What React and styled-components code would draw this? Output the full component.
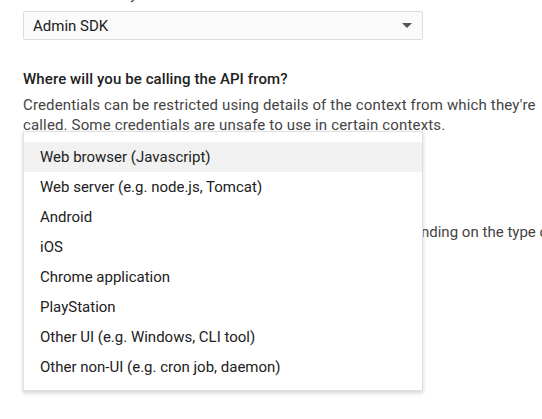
import styled, { createGlobalStyle } from 'styled-components';

const platforms = [
  'Web browser (Javascript)',
  'Web server (e.g. node.js, Tomcat)',
  'Android',
  'iOS',
  'Chrome application',
  'PlayStation',
  'Other UI (e.g. Windows, CLI tool)',
  'Other non-UI (e.g. cron job, daemon)',
];

export default function App() {
  return (
    <>
      <GlobalStyle />
      <Page>
        <Form>
          <Text>restricted to only call certain APIs.</Text>
          <Select>
            <span>Admin SDK</span>
            <Arrow />
          </Select>

          <Heading>Where will you be calling the API from?</Heading>
          <Text>
            Credentials can be restricted using details of the context from which they're called. Some
            credentials are unsafe to use in certain contexts.
          </Text>

          <Hidden>
            <Heading>What data will you be accessing?</Heading>
            <Text nowrap>
              Credentials are issued and restricted in different ways, depending on the type of data you request.
            </Text>
          </Hidden>

          <Menu>
            {platforms.map((p, i) => (
              <Item key={p} active={i === 0}>
                {p}
              </Item>
            ))}
          </Menu>
        </Form>
      </Page>
    </>
  );
}

const GlobalStyle = createGlobalStyle`
  html, body {
    margin: 0;
    background: #fff;
    overflow: hidden;
  }
  body {
    font-family: Roboto, "Noto Sans", Arial, sans-serif;
  }
`;

const Page = styled.div`
  width: 542px;
  height: 419px;
  overflow: hidden;
`;

const Form = styled.div`
  position: relative;
  width: 552px;
  margin-top: -16px;
  padding-left: 23px;
  display: flex;
  flex-direction: column;
`;

const Text = styled.p`
  margin: 0;
  font-size: 15px;
  line-height: 20px;
  letter-spacing: ${({ nowrap }) => (nowrap ? '0.02px' : '0.15px')};
  color: #444;
  white-space: ${({ nowrap }) => (nowrap ? 'nowrap' : 'normal')};
`;

const Select = styled.div`
  box-sizing: border-box;
  width: 400px;
  height: 29px;
  margin-top: 7px;
  padding: 0 10px 0 9px;
  display: flex;
  align-items: center;
  justify-content: space-between;
  border: 1px solid #dcdcdc;
  border-radius: 2px;
  background: #fafafa;
  font-size: 15px;
  color: #212121;
`;

const Arrow = styled.i`
  width: 0;
  height: 0;
  border-left: 5px solid transparent;
  border-right: 5px solid transparent;
  border-top: 5px solid #555;
`;

const Heading = styled.h3`
  margin: 29px 0 6px;
  font-size: 15px;
  line-height: 20px;
  font-weight: 500;
  letter-spacing: 0.1px;
  color: #212121;
`;

const Hidden = styled.section`
  margin-top: 61px;

  ${Heading} {
    margin-top: 0;
  }
`;

const Menu = styled.ul`
  position: absolute;
  top: 147px;
  left: 23px;
  box-sizing: border-box;
  width: 400px;
  margin: 0;
  padding: 10px 0 8px;
  list-style: none;
  background: #fff;
  border: 1px solid #e0e0e0;
  box-shadow: 0 2px 4px rgba(0, 0, 0, 0.18);
`;

const Item = styled.li`
  height: 30px;
  padding-left: 16px;
  display: flex;
  align-items: center;
  font-size: 15px;
  color: #212121;
  background: ${({ active }) => (active ? '#f1f1f1' : 'transparent')};
`;
